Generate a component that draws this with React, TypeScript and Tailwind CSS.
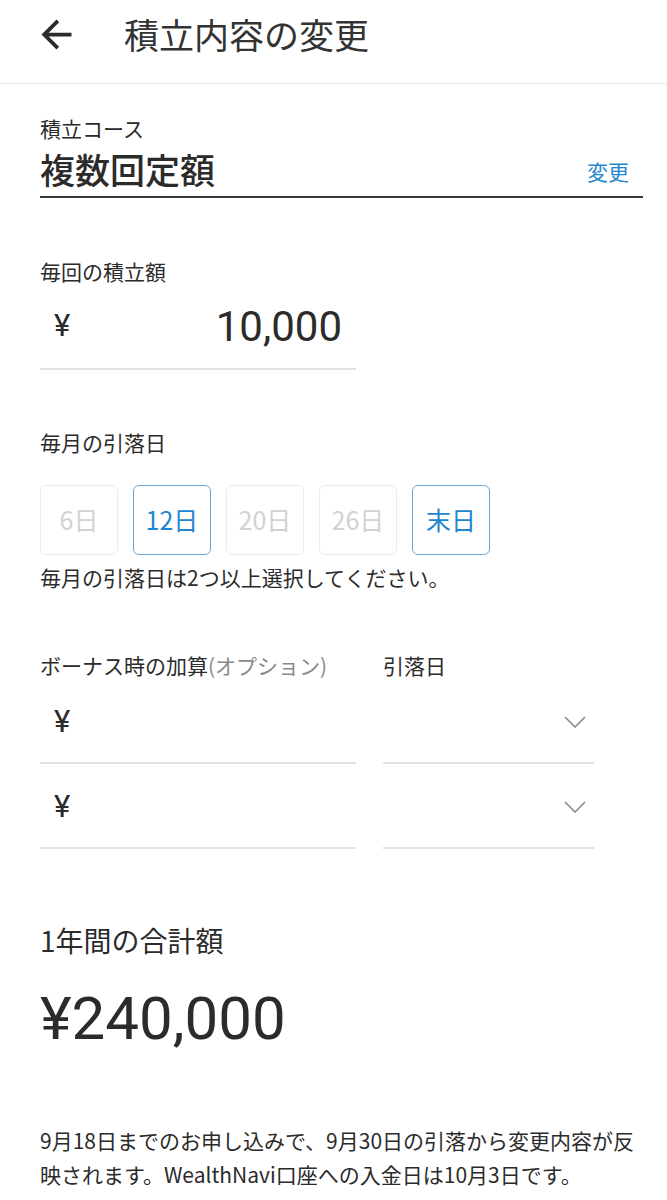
const jp = { fontFamily: '"Noto Sans CJK JP", "Noto Sans", sans-serif' };
const num = { fontFamily: 'Roboto, "Noto Sans CJK JP", sans-serif' };

function Chevron() {
  return (
    <svg width="22" height="12" viewBox="0 0 22 12" fill="none" className="text-[#8a8a8a]">
      <path d="M1 1l10 10L21 1" stroke="currentColor" strokeWidth="1.6" />
    </svg>
  );
}

function DayButton({ label, active }: { label: string; active?: boolean }) {
  return (
    <div
      className={
        active
          ? "w-[78px] h-[70px] flex items-center justify-center rounded-[6px] border border-[#6ea5cf] text-[#1e86d0] text-[25px]"
          : "w-[78px] h-[70px] flex items-center justify-center rounded-[6px] border border-[#ebebeb] text-[#d2d2d2] text-[25px]"
      }
    >
      {label}
    </div>
  );
}

function BonusRow() {
  return (
    <div className="flex gap-[27px]">
      <div className="w-[316px] h-[85px] flex items-center pl-[14px] pt-[3px] border-b-2 border-[#e2e2e2] text-[31px] text-[#2b2b2b]" style={num}>
        ¥
      </div>
      <div className="w-[211px] h-[85px] flex items-center justify-end pr-[8px] pt-[3px] border-b-2 border-[#e2e2e2]">
        <Chevron />
      </div>
    </div>
  );
}

export default function App() {
  return (
    <div className="w-[667px] min-h-[1200px] bg-white text-[#2b2b2b]" style={jp}>
      <header className="h-[84px] flex items-center border-b border-[#e6e6e6]">
        <div className="w-[124px] pl-[34px] flex items-center -mt-[14px]">
          <svg width="45" height="45" viewBox="0 0 24 24" fill="#2b2b2b">
            <path d="M20 11H7.83l5.59-5.59L12 4l-8 8 8 8 1.41-1.41L7.83 13H20v-2z" />
          </svg>
        </div>
        <h1 className="text-[35px] text-[#333] leading-none -mt-[16px]">積立内容の変更</h1>
      </header>

      <main className="pl-[40px] pr-[24px]">
        <section className="pt-[30px]">
          <div className="text-[21px] leading-[28px]">積立コース</div>
          <div className="flex items-end justify-between border-b-2 border-[#3a3a3a] pb-[1px]">
            <div className="text-[35px] leading-[53px] font-medium">複数回定額</div>
            <div className="text-[21px] text-[#2486cc] pb-[8px] pr-[14px]">変更</div>
          </div>
        </section>

        <section className="pt-[59px]">
          <div className="text-[21px] leading-[28px]">毎回の積立額</div>
          <div className="w-[316px] h-[85px] flex items-center justify-between pl-[14px] pr-[14px] border-b-2 border-[#e2e2e2]" style={num}>
            <span className="text-[31px]">¥</span>
            <span className="text-[42px]">10,000</span>
          </div>
        </section>

        <section className="pt-[58px]">
          <div className="text-[21px] leading-[28px]">毎月の引落日</div>
          <div className="flex gap-[15px] pt-[29px]">
            <DayButton label="6日" />
            <DayButton label="12日" active />
            <DayButton label="20日" />
            <DayButton label="26日" />
            <DayButton label="末日" active />
          </div>
          <div className="text-[21px] leading-[28px] pt-[8px]">毎月の引落日は2つ以上選択してください。</div>
        </section>

        <section className="pt-[60px]">
          <div className="flex gap-[27px]">
            <div className="w-[316px] text-[21px] leading-[28px]">
              ボーナス時の加算<span className="text-[#8a8a8a]">(オプション)</span>
            </div>
            <div className="text-[21px] leading-[28px]">引落日</div>
          </div>
          <BonusRow />
          <BonusRow />
        </section>

        <section className="pt-[73px]">
          <div className="text-[28px] leading-[36px]">1年間の合計額</div>
          <div className="text-[60px] leading-[70px] pt-[26px]" style={num}>¥240,000</div>
        </section>

        <p className="pt-[69px] text-[21px] leading-[34px] pr-[4px]">
          9月18日までのお申し込みで、9月30日の引落から変更内容が反映されます。WealthNavi口座への入金日は10月3日です。
        </p>
      </main>
    </div>
  );
}
